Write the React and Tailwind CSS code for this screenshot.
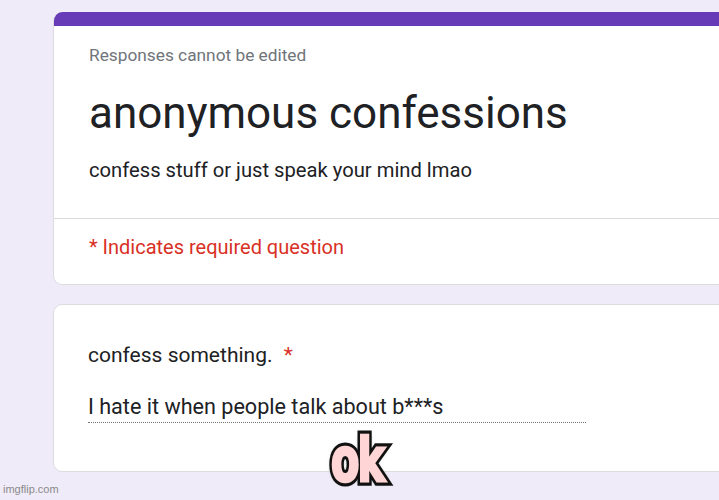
const App = () => {
  const caption =
    "text-[46px] font-bold leading-none tracking-[-2px] font-['DejaVu_Sans_Condensed','DejaVu_Sans',sans-serif]";
  return (
    <div className="relative w-[719px] h-[500px] overflow-hidden bg-[#f0ebf8] font-['Roboto',sans-serif]">
      <div className="flex flex-col gap-[19px] pl-[53px] pt-[12px] w-[760px]">
        {/* header card */}
        <div className="bg-white rounded-[9px] overflow-hidden border border-[#dadce0] border-t-0">
          <div className="h-[14px] bg-[#673ab7]" />
          <div className="px-[35px] pt-[18px] pb-[35px] border-b border-[#dadce0]">
            <p className="text-[17.3px] text-[#70757a] leading-[22px]">Responses cannot be edited</p>
            <h1 className="text-[44px] text-[#202124] leading-[52px] mt-[21px]">anonymous confessions</h1>
            <p className="text-[20.2px] text-[#202124] leading-[26px] mt-[18px]">confess stuff or just speak your mind lmao</p>
          </div>
          <div className="px-[35px] pt-[15px] pb-[24px]">
            <p className="text-[20px] text-[#d93025] leading-[26px]">* Indicates required question</p>
          </div>
        </div>

        {/* question card */}
        <div className="bg-white rounded-[9px] border border-[#dadce0] h-[168px] px-[34px] pt-[36px]">
          <p className="text-[21px] text-[#202124] leading-[28px]">
            confess something. <span className="text-[#d93025] ml-[6px]">*</span>
          </p>
          <div className="mt-[24px] w-[498px] border-b border-dotted border-[#70757a] pb-[1px]">
            <p className="text-[21.6px] text-[#202124] leading-[28px]">I hate it when people talk about b***s</p>
          </div>
        </div>
      </div>

      {/* meme caption */}
      <div className="absolute left-[331px] top-[430px] scale-y-[1.3] origin-top">
        <div className={`${caption} text-[#111] [-webkit-text-stroke:7px_#111] [text-shadow:0_0_5px_#000]`}>ok</div>
        <div className={`${caption} absolute inset-0 text-[#ffd5d5] [-webkit-text-stroke:2px_#ffd5d5]`}>ok</div>
      </div>

      <div className="absolute left-[3px] bottom-[3px] text-[11px] text-[#8a8a8a] font-['Liberation_Sans',sans-serif]">
        imgflip.com
      </div>
    </div>
  );
};
export default App;
